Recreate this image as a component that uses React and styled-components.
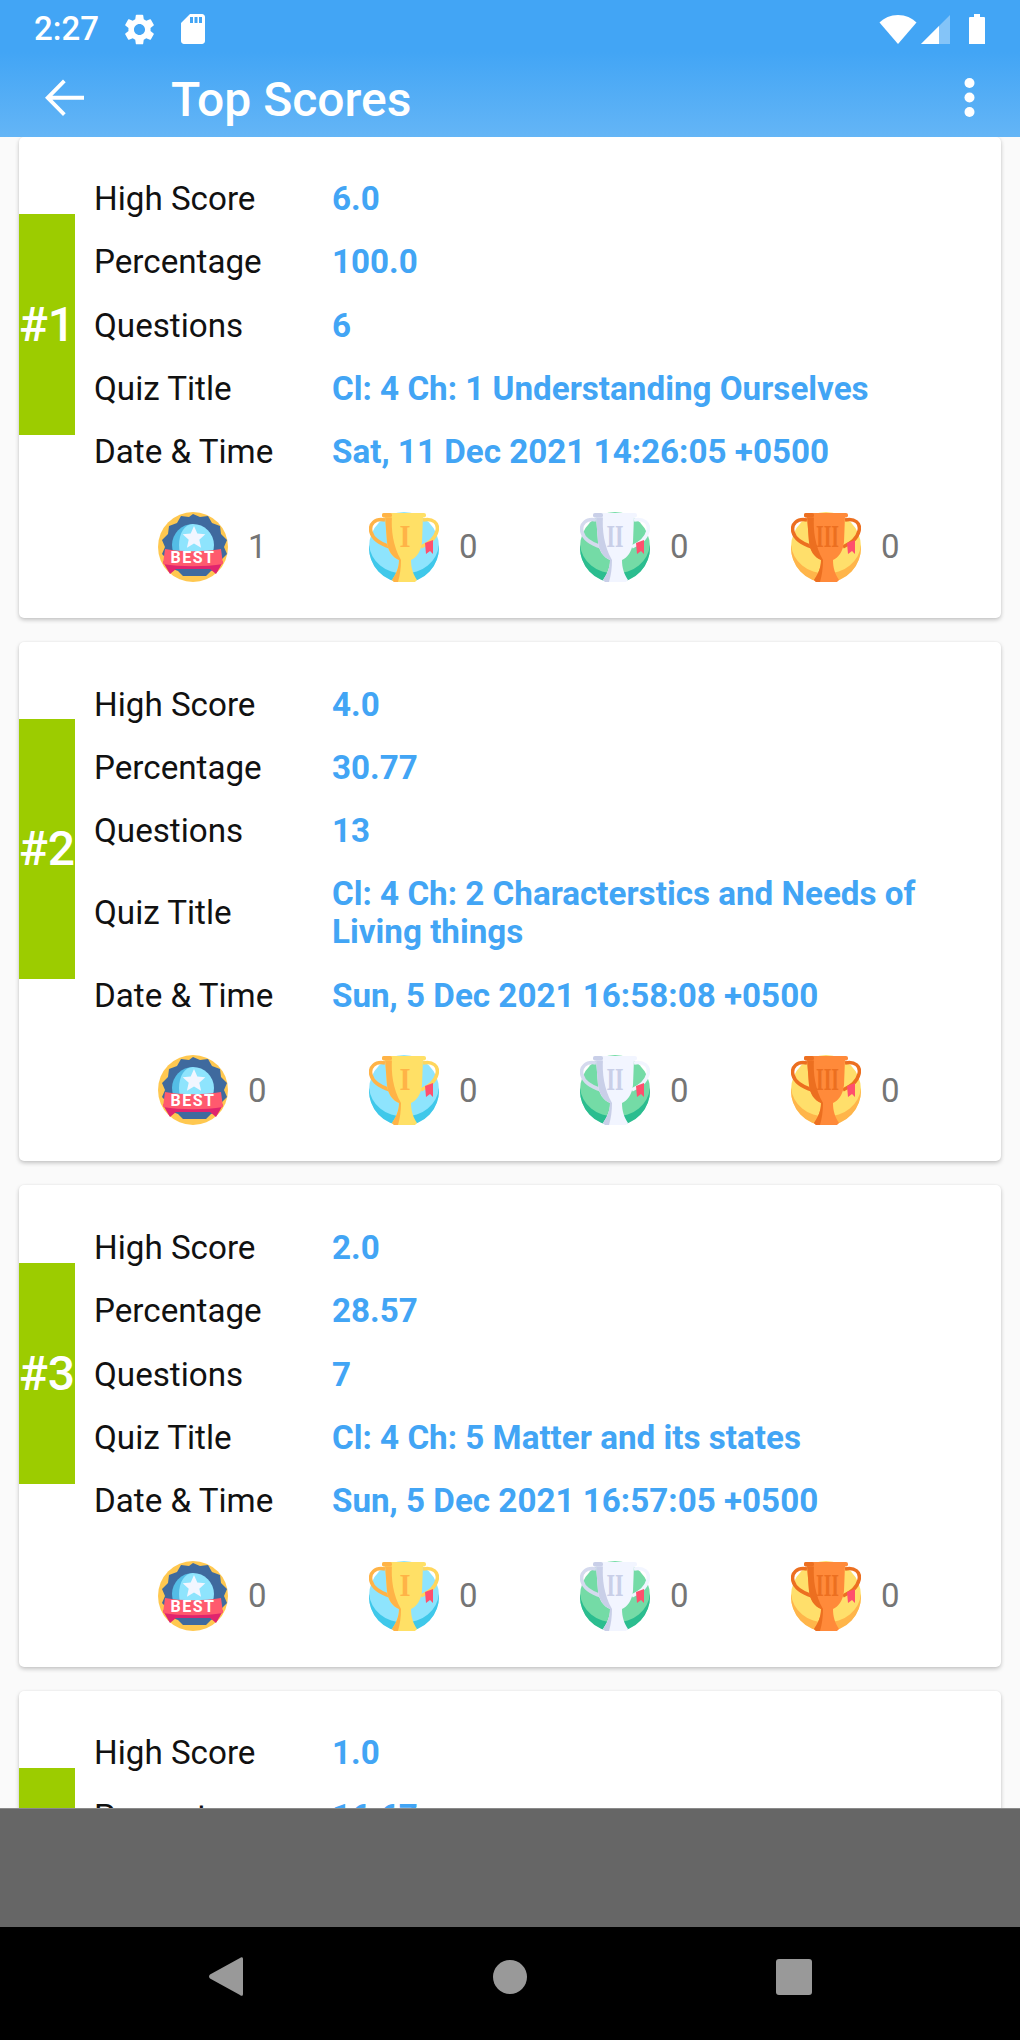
import React from "react";
import styled, { createGlobalStyle } from "styled-components";
import { MdSettings, MdSdStorage } from "react-icons/md";

const GlobalStyle = createGlobalStyle`
  html, body {
    margin: 0;
    padding: 0;
    background: #fafafa;
  }
  * {
    box-sizing: border-box;
  }
`;

const Phone = styled.div`
  width: 1020px;
  height: 2040px;
  display: flex;
  flex-direction: column;
  overflow: hidden;
  font-family: Roboto, "Liberation Sans", sans-serif;
  background: #fafafa;
`;

const Header = styled.header`
  flex: none;
  height: 137px;
  background: linear-gradient(180deg, #42a5f5 0%, #42a5f5 38%, #64b5f6 100%);
  color: #fff;
  position: relative;
  z-index: 2;
`;

const StatusBar = styled.div`
  height: 58px;
  display: flex;
  align-items: center;
  padding: 0 35px 0 34px;
`;

const Clock = styled.span`
  font-size: 33px;
  font-weight: 500;
  width: 87px;
  line-height: 58px;
`;

const StatusGroup = styled.div`
  display: flex;
  align-items: center;
  margin-left: ${(p) => (p.$end ? "auto" : "0")};
  gap: ${(p) => p.$gap || 0}px;
`;

const AppBar = styled.div`
  height: 79px;
  display: flex;
  align-items: center;
  padding: 0 45px;
`;

const Title = styled.h1`
  margin: 0 0 0 87px;
  padding-top: 4px;
  font-size: 48px;
  font-weight: 500;
  line-height: 75px;
  flex: 1;
`;

const List = styled.main`
  flex: 1;
  min-height: 0;
  overflow: hidden;
  padding: 0 19px;
  display: flex;
  flex-direction: column;
  gap: 24px;
`;

const Card = styled.section`
  flex: none;
  background: #fff;
  border-radius: 5px;
  box-shadow: 0 2px 4px rgba(0, 0, 0, 0.22), 0 0 2px rgba(0, 0, 0, 0.06);
  padding: 31px 0 36px;

  &:first-child {
    margin-top: -0.5px;
  }
`;

const Summary = styled.div`
  display: flex;
  align-items: center;
`;

const RankBar = styled.div`
  flex: none;
  width: 56px;
  height: ${(p) => p.$height}px;
  margin-bottom: 3px;
  background: #9ccc00;
  color: #fff;
  font-size: 48px;
  font-weight: 500;
  display: flex;
  align-items: center;
  justify-content: center;
`;

const Rows = styled.div`
  flex: 1;
  padding: 0 26px 0 19px;
`;

const Row = styled.div`
  display: grid;
  grid-template-columns: 238px 1fr;
  align-items: center;
  padding: 12.65px 0;
`;

const Label = styled.span`
  font-size: 33.2px;
  line-height: 38px;
  color: #111;
`;

const Value = styled.span`
  font-size: 33.2px;
  line-height: 38px;
  font-weight: 700;
  color: #42a5f5;
`;

const Medals = styled.div`
  display: grid;
  grid-template-columns: repeat(4, 211px);
  margin: 28px 0 0 139px;
`;

const Medal = styled.div`
  display: flex;
  align-items: center;
  gap: 20px;
`;

const Count = styled.span`
  font-size: 33px;
  color: #757575;
`;

const AdSpace = styled.div`
  flex: none;
  height: 119px;
  background: #666;
  border-top: 1px solid #8a8a8a;
  position: relative;
  z-index: 2;
`;

const NavBar = styled.nav`
  flex: none;
  height: 113px;
  background: #000;
  display: grid;
  grid-template-columns: repeat(3, 1fr);
  align-items: center;
  padding: 0 84px 14px 84px;
  justify-items: center;
  position: relative;
  z-index: 2;
`;

const BackIcon = () => (
  <svg width="39" height="38" viewBox="0 0 39 38" fill="#fff">
    <path d="M18 .5 20.7 3.2 7.400 16.700H39v4H7.400l13.300 13.500-2.700 2.800L0 18.700z" />
  </svg>
);

const MoreIcon = () => (
  <svg width="11" height="39" viewBox="0 0 11 39" fill="#fff">
    <circle cx="5.500" cy="5" r="5" />
    <circle cx="5.500" cy="19.500" r="5" />
    <circle cx="5.500" cy="34" r="5" />
  </svg>
);

const WifiIcon = () => (
  <svg width="38" height="29" viewBox="0 0 38 29" fill="#fff">
    <path d="M19 29 .5 7.500C5 3 11.500 0 19 0s14 3 18.500 7.500z" />
  </svg>
);

const SignalIcon = () => (
  <svg width="29" height="29" viewBox="0 0 29 29">
    <path d="M29 0v29H0z" fill="#fff" fillOpacity="0.35" />
    <path d="M18 11v18H0z" fill="#fff" />
  </svg>
);

const BatteryIcon = () => (
  <svg width="16" height="30" viewBox="0 0 16 30" fill="#fff">
    <path d="M5 0h6v3h4a1 1 0 0 1 1 1v26H0V4a1 1 0 0 1 1-1h4z" />
  </svg>
);

const BestBadge = () => (
  <svg width="70" height="70" viewBox="0 0 70 70">
    <circle cx="35" cy="35" r="35" fill="#ffc850" />
    <path
      d="M35 2l7 3 8-1 4 7 8 3 1 8 6 6-3 7 3 7-6 6-2 8-8 3-5 5H25l-5-5-8-3-2-8-6-6 3-7-3-7 6-6 1-8 8-3 4-7 8 1z"
      fill="#3f6a9e"
    />
    <path d="M35 12a21 21 0 1 0 0 42z" fill="#54bde6" />
    <path d="M35 12a21 21 0 0 1 0 42c-8 0-14-9-14-21s6-21 14-21z" fill="#8ee4fd" />
    <path
      d="M36 14l3.300 7.500 8 .7-6 5.500 1.800 8-7.100-4.200-7.100 4.200 1.800-8-6-5.500 8-.7z"
      fill="#f2f6ff"
    />
    <path d="M5 50l5-6h50l5 6-7 12-6-5H18l-6 5z" fill="#e0246e" />
    <path d="M7 37c18 3 38 3 56 0l2 15c-18 3-42 3-60 0z" fill="#ff5a6e" />
    <text
      x="35"
      y="51"
      fontFamily="Roboto, sans-serif"
      fontSize="16"
      fontWeight="700"
      letterSpacing="1.500"
      textAnchor="middle"
      fill="#fff"
    >
      BEST
    </text>
  </svg>
);

const Trophy = ({ numeral, numeralWidth, numeralX, disc, rim, light, dark, leftHandle, rightHandle, mark }) => (
  <svg width="70" height="70" viewBox="0 0 70 70">
    <circle cx="35" cy="35" r="35" fill={disc} />
    <path d="M.1 33A35 35 0 1 0 69.900 33A35 31 0 0 1 .1 33z" fill={rim} />
    <path d="M16 8C6 6 0 12 2 20c2 8 10 12 19 15" fill="none" stroke={leftHandle} strokeWidth="3.500" />
    <path d="M54 8c10-2 16 3 14 11-2 8-8 12-16 16" fill="none" stroke={rightHandle} strokeWidth="3.500" />
    <path d="M16 4h38l-1 26c-1 10-6 16-11 18 0 8 2 14 6 20l-2 2H25l-2-2c4-6 7-12 7-20-7-3-11-9-12-18z" fill={light} />
    <path d="M16 4h7c-1 14 1 30 9 44 0 8-1 15-3 22h-4l-2-2c4-6 7-12 7-20-7-3-11-9-12-18z" fill={dark} />
    <rect x="13" y="1" width="44" height="4.500" rx="2" fill={light} />
    <rect x="13" y="1" width="10" height="4.500" rx="2" fill={dark} />
    <text
      x={numeralX}
      y="35"
      fontFamily="'Liberation Serif', serif"
      fontSize="32"
      fontWeight="700"
      textAnchor="middle"
      fill={mark}
      textLength={numeralWidth}
      lengthAdjust="spacingAndGlyphs"
    >
      {numeral}
    </text>
    <path d="M56 31l8-3v14l-3-3-4 3z" fill="#ff4f6d" />
  </svg>
);

const gold = {
  numeral: "I",
  numeralWidth: 11,
  numeralX: 36,
  disc: "#8ee4fd",
  rim: "#3fc8ea",
  light: "#ffe066",
  dark: "#ffb347",
  leftHandle: "#ffb347",
  rightHandle: "#ffd65c",
  mark: "#ffb347",
};

const silver = {
  numeral: "II",
  numeralWidth: 17,
  numeralX: 35,
  disc: "#74dba6",
  rim: "#2bbd8f",
  light: "#f2f5ff",
  dark: "#c9cfe8",
  leftHandle: "#d5daee",
  rightHandle: "#f2f5ff",
  mark: "#c9cfe8",
};

const bronze = {
  numeral: "III",
  numeralWidth: 23,
  numeralX: 36.5,
  disc: "#ffdf6b",
  rim: "#ffb54a",
  light: "#ff8a3a",
  dark: "#ec6f20",
  leftHandle: "#ec6f20",
  rightHandle: "#ec6f20",
  mark: "#ec6f20",
};

const scores = [
  {
    rank: "#1",
    high: "6.0",
    percent: "100.0",
    questions: "6",
    title: "Cl: 4 Ch: 1 Understanding Ourselves",
    date: "Sat, 11 Dec 2021 14:26:05 +0500",
    best: 1,
    barHeight: 221,
  },
  {
    rank: "#2",
    high: "4.0",
    percent: "30.77",
    questions: "13",
    title: "Cl: 4 Ch: 2 Characterstics and Needs of Living things",
    date: "Sun, 5 Dec 2021 16:58:08 +0500",
    best: 0,
    barHeight: 260,
  },
  {
    rank: "#3",
    high: "2.0",
    percent: "28.57",
    questions: "7",
    title: "Cl: 4 Ch: 5 Matter and its states",
    date: "Sun, 5 Dec 2021 16:57:05 +0500",
    best: 0,
    barHeight: 221,
  },
  {
    rank: "#4",
    high: "1.0",
    percent: "16.67",
    questions: "6",
    title: "Cl: 4 Ch: 3 Plants",
    date: "Sun, 5 Dec 2021 16:55:41 +0500",
    best: 0,
    barHeight: 221,
  },
];

const ScoreCard = ({ score }) => (
  <Card>
    <Summary>
      <RankBar $height={score.barHeight}>{score.rank}</RankBar>
      <Rows>
        <Row>
          <Label>High Score</Label>
          <Value>{score.high}</Value>
        </Row>
        <Row>
          <Label>Percentage</Label>
          <Value>{score.percent}</Value>
        </Row>
        <Row>
          <Label>Questions</Label>
          <Value>{score.questions}</Value>
        </Row>
        <Row>
          <Label>Quiz Title</Label>
          <Value>{score.title}</Value>
        </Row>
        <Row>
          <Label>Date &amp; Time</Label>
          <Value>{score.date}</Value>
        </Row>
      </Rows>
    </Summary>
    <Medals>
      <Medal>
        <BestBadge />
        <Count>{score.best}</Count>
      </Medal>
      <Medal>
        <Trophy {...gold} />
        <Count>0</Count>
      </Medal>
      <Medal>
        <Trophy {...silver} />
        <Count>0</Count>
      </Medal>
      <Medal>
        <Trophy {...bronze} />
        <Count>0</Count>
      </Medal>
    </Medals>
  </Card>
);

const App = () => (
  <Phone>
    <GlobalStyle />
    <Header>
      <StatusBar>
        <Clock>2:27</Clock>
        <StatusGroup $gap={17}>
          <MdSettings size={37} />
          <MdSdStorage size={36} />
        </StatusGroup>
        <StatusGroup $end $gap={19}>
          <StatusGroup $gap={4}>
            <WifiIcon />
            <SignalIcon />
          </StatusGroup>
          <BatteryIcon />
        </StatusGroup>
      </StatusBar>
      <AppBar>
        <BackIcon />
        <Title>Top Scores</Title>
        <MoreIcon />
      </AppBar>
    </Header>
    <List>
      {scores.map((score) => (
        <ScoreCard key={score.rank} score={score} />
      ))}
    </List>
    <AdSpace />
    <NavBar>
      <svg width="34" height="39" viewBox="0 0 34 39" fill="#999">
        <path d="M34 2v35c0 2-1.500 2.500-3 1L1 21.500c-1.300-1.300-1.300-2.700 0-4L31 1c1.500-1.500 3-1 3 1z" />
      </svg>
      <svg width="34" height="34" viewBox="0 0 34 34" fill="#999">
        <circle cx="17" cy="17" r="17" />
      </svg>
      <svg width="36" height="36" viewBox="0 0 36 36" fill="#999">
        <rect width="36" height="36" rx="3" />
      </svg>
    </NavBar>
  </Phone>
);

export default App;
